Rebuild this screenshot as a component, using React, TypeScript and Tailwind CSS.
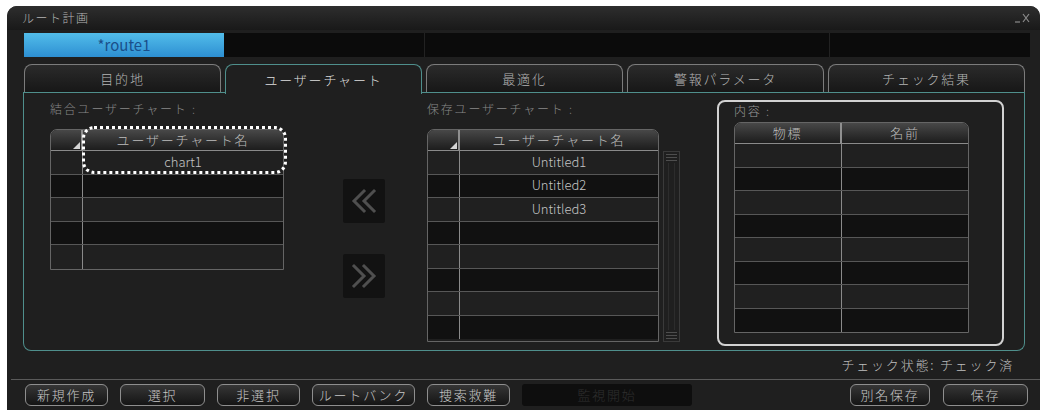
import type { ReactNode } from 'react'

const tabs = ['目的地', 'ユーザーチャート', '最適化', '警報パラメータ', 'チェック結果']
const activeTab = 1

function Tab({ label, active }: { label: string; active: boolean }) {
  if (active) {
    return (
      <div className="flex-1 -mb-[1.5px] h-[29.5px] flex items-center justify-center rounded-t-[8px] border-[1.5px] border-b-0 border-[#4f8f8c] bg-[#1f1f1f] text-[13px] tracking-[1.8px] text-[#dedede]">
        {label}
      </div>
    )
  }
  return (
    <div className="flex-1 h-[28px] flex items-center justify-center rounded-t-[8px] border border-b-0 border-[#7c7c7c] bg-linear-to-b from-[#2b2b2b] to-[#171717] text-[13px] tracking-[1.8px] text-[#b4b4b4]">
      {label}
    </div>
  )
}

function HeadCorner() {
  return (
    <div className="relative h-full w-full">
      <span className="absolute right-[1px] bottom-[1px] h-0 w-0 border-l-[7px] border-l-transparent border-b-[7px] border-b-[#d4d4d4]" />
    </div>
  )
}

function DataGrid({
  width,
  firstCol,
  head,
  cells,
  count,
}: {
  width: string
  firstCol: string
  head: [ReactNode, ReactNode]
  cells?: string[]
  count: number
}) {
  return (
    <div className={`${width} rounded-t-[7px] border border-[#656565] overflow-hidden`}>
      <div className="flex h-[21px] border-b border-[#8a8a8a] bg-linear-to-b from-[#484848] to-[#1d1d1d] text-[13px] tracking-[1.8px] text-[#bdbdbd]">
        <div className={`${firstCol} flex items-center justify-center border-r-2 border-[#8f8f8f]`}>{head[0]}</div>
        <div className="flex-1 flex items-center justify-center">{head[1]}</div>
      </div>
      {Array.from({ length: count }).map((_, i) => (
        <div
          key={i}
          className={`flex h-[23.5px] border-b border-[#575757] last:border-b-0 ${i % 2 === 0 ? 'bg-[#202020]' : 'bg-[#111111]'}`}
        >
          <div className={`${firstCol} border-r border-[#8a8a8a]`} />
          <div className="flex-1 flex items-center justify-center pb-[2px] text-[13px] text-[#c4c4c4]">{cells?.[i] ?? ''}</div>
        </div>
      ))}
    </div>
  )
}

function ArrowBtn({ dir }: { dir: 'left' | 'right' }) {
  return (
    <div className="w-[42px] h-[44px] rounded-[2px] bg-[#121212] flex items-center justify-center">
      <svg width="30" height="30" viewBox="0 0 30 30" fill="none" stroke="#4f4f4f" strokeWidth="3" strokeLinecap="square">
        {dir === 'left' ? (
          <>
            <path d="M15 5 L5 15 L15 25" />
            <path d="M25 5 L15 15 L25 25" />
          </>
        ) : (
          <>
            <path d="M5 5 L15 15 L5 25" />
            <path d="M15 5 L25 15 L15 25" />
          </>
        )}
      </svg>
    </div>
  )
}

function ScrollTrack() {
  return (
    <div className="mt-[22px] w-[17px] h-[191px] border border-[#3a3a3a] flex flex-col justify-between p-[2px]">
      <div className="flex flex-col gap-[2px]">
        <div className="h-px bg-[#4e4e4e]" />
        <div className="h-px bg-[#4e4e4e]" />
        <div className="h-px bg-[#4e4e4e]" />
      </div>
      <div className="flex-1 mx-[2px] my-[2px] border-x border-[#2c2c2c]" />
      <div className="flex flex-col gap-[2px]">
        <div className="h-px bg-[#4e4e4e]" />
        <div className="h-px bg-[#4e4e4e]" />
        <div className="h-px bg-[#4e4e4e]" />
      </div>
    </div>
  )
}

function Btn({ label, w, disabled }: { label: string; w: string; disabled?: boolean }) {
  if (disabled) {
    return (
      <div className={`${w} h-[22px] rounded-[3px] bg-[#0e0e0e] flex items-center justify-center text-[13px] tracking-[1.8px] text-[#2e2e2e]`}>
        {label}
      </div>
    )
  }
  return (
    <div
      className={`${w} h-[22px] rounded-[6px] border border-[#8e8e8e] bg-linear-to-b from-[#363636] to-[#151515] flex items-center justify-center text-[13px] tracking-[1.8px] text-[#c6c6c6]`}
    >
      {label}
    </div>
  )
}

export default function App() {
  return (
    <div className="w-[1048px] h-[410px] overflow-hidden bg-white pt-[6px] pl-[7px] font-light font-['Noto_Sans_CJK_JP',sans-serif]">
      <div className="w-[1033px] h-[410px] rounded-t-[10px] bg-[#1f1f1f] flex flex-col">
        {/* title bar */}
        <div className="h-[24px] rounded-t-[10px] bg-linear-to-b from-[#2e2e2e] to-[#191919] pl-[15px] pr-[10px] flex items-center justify-between">
          <span className="text-[12px] tracking-[1.5px] text-[#b4b4b4]">ルート計画</span>
          <svg width="16" height="12" viewBox="0 0 16 12" fill="none" stroke="#8a8a8a" strokeWidth="1.2">
            <path d="M1 10 H6" />
            <path d="M9 2 L15 10 M15 2 L9 10" />
          </svg>
        </div>

        {/* route strip */}
        <div className="mt-[3px] ml-[17px] w-[1006px] h-[24px] bg-[#0b0b0b] flex">
          <div className="w-[200px] h-full bg-linear-to-b from-[#52bdea] to-[#2d8fd2] flex items-center justify-center font-normal text-[15px] text-[#1a4f8a]">
            *route1
          </div>
          <div className="w-[201px] h-full border-r border-[#222]" />
          <div className="w-[405px] h-full border-r border-[#222]" />
        </div>

        {/* tabs */}
        <div className="mt-[7px] ml-[16px] w-[1002px] pl-[1px] flex gap-[4px] border-b-[1.5px] border-[#4f8f8c]">
          {tabs.map((t, i) => (
            <Tab key={t} label={t} active={i === activeTab} />
          ))}
        </div>

        {/* panel */}
        <div className="ml-[16px] w-[1002px] h-[258px] rounded-b-[8px] border-[1.5px] border-t-0 border-[#4f8f8c] pl-[26px] flex">
          <div className="pt-[8px] flex flex-col">
            <span className="h-[16px] text-[12px] tracking-[1.8px] leading-[16px] text-[#888]">結合ユーザーチャート :</span>
            <div className="relative mt-[12px]">
              <DataGrid
                width="w-[234px]"
                firstCol="w-[32px]"
                head={[<HeadCorner key="c" />, 'ユーザーチャート名']}
                cells={['chart1']}
                count={5}
              />
              <div className="absolute left-[32px] top-[-3px] w-[205px] h-[48px] rounded-[12px] border-[3px] border-dotted border-white" />
            </div>
          </div>

          <div className="ml-[59px] pt-[86px] flex flex-col gap-[31px]">
            <ArrowBtn dir="left" />
            <ArrowBtn dir="right" />
          </div>

          <div className="ml-[42px] pt-[8px] flex flex-col">
            <span className="h-[16px] text-[12px] tracking-[1.8px] leading-[16px] text-[#888]">保存ユーザーチャート :</span>
            <div className="mt-[12px] flex gap-[4px]">
              <DataGrid
                width="w-[232px]"
                firstCol="w-[32px]"
                head={[<HeadCorner key="c" />, 'ユーザーチャート名']}
                cells={['Untitled1', 'Untitled2', 'Untitled3']}
                count={8}
              />
              <ScrollTrack />
            </div>
          </div>

          <div className="ml-[37px] mt-[7px] w-[287px] h-[246px] rounded-[8px] border-2 border-[#d2d2d2] pl-[15px] pt-[1px] flex flex-col">
            <span className="h-[16px] text-[12px] tracking-[1.8px] leading-[16px] text-[#9c9c9c]">内容 :</span>
            <div className="mt-[3px]">
              <DataGrid width="w-[235px]" firstCol="w-[107px]" head={['物標', '名前']} count={8} />
            </div>
          </div>
        </div>

        {/* status */}
        <div className="h-[28px] pr-[26px] flex items-center justify-end text-[13px] tracking-[1.8px] text-[#bebebe]">
          チェック状態: チェック済
        </div>

        {/* bottom buttons */}
        <div className="ml-[4px] border-t border-[#5a5a5a] pt-[4px] pl-[14px] pr-[12px] flex gap-[12px]">
          <Btn label="新規作成" w="w-[83px]" />
          <Btn label="選択" w="w-[85px]" />
          <Btn label="非選択" w="w-[83px]" />
          <Btn label="ルートバンク" w="w-[103px]" />
          <Btn label="捜索救難" w="w-[83px]" />
          <Btn label="監視開始" w="w-[170px]" disabled />
          <div className="ml-auto flex gap-[13px]">
            <Btn label="別名保存" w="w-[80px]" />
            <Btn label="保存" w="w-[85px]" />
          </div>
        </div>
      </div>
    </div>
  )
}
